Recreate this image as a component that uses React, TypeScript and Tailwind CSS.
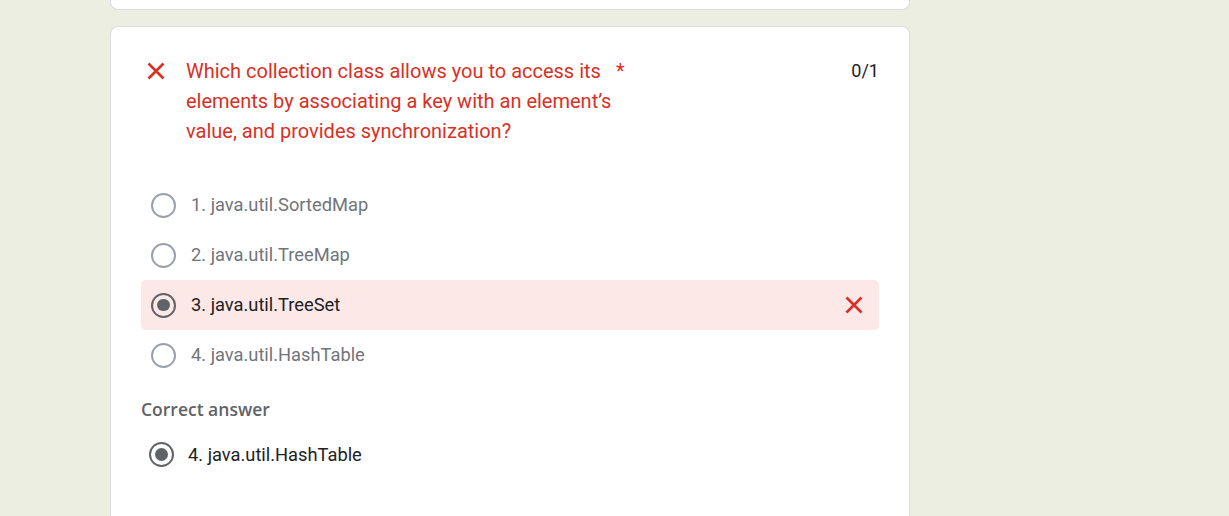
const options = [
  { label: '1. java.util.SortedMap', selected: false },
  { label: '2. java.util.TreeMap', selected: false },
  { label: '3. java.util.TreeSet', selected: true },
  { label: '4. java.util.HashTable', selected: false },
]

function Cross({ className = '' }: { className?: string }) {
  return (
    <svg className={className} width="18" height="18" viewBox="0 0 18 18" fill="none" aria-hidden="true">
      <path d="M1.5 1.5L16.5 16.5M16.5 1.5L1.5 16.5" stroke="#d93025" strokeWidth="2.6" />
    </svg>
  )
}

function Radio({ checked }: { checked: boolean }) {
  return (
    <span
      className={
        'flex h-[25px] w-[25px] shrink-0 items-center justify-center rounded-full border-[2.5px] ' +
        (checked ? 'border-[#5f6368]' : 'border-[#9aa0a6]')
      }
    >
      {checked && <span className="h-[12.5px] w-[12.5px] rounded-full bg-[#5f6368]" />}
    </span>
  )
}

export default function App() {
  return (
    <div className="min-h-[516px] w-full overflow-hidden bg-[#ebeee0] font-['Roboto',sans-serif]">
      {/* bottom of the previous card */}
      <div className="ml-[110px] h-[10px] w-[800px] rounded-b-lg border border-t-0 border-[#dadce0] bg-white" />

      <div className="ml-[110px] mt-[16px] w-[800px] rounded-t-lg border border-b-0 border-[#dadce0] bg-white px-[30px] pt-[29px] pb-[60px]">
        {/* question header */}
        <div className="flex items-start">
          <div className="flex w-[45px] shrink-0 justify-start pl-[6px] pt-[6px]">
            <Cross />
          </div>
          <div className="flex flex-1 items-start">
            <span className="w-[428px] text-[20px] leading-[30px] text-[#d93025]">
              Which collection class allows you to access its elements by associating a key with an element’s value, and provides synchronization?
            </span>
            <span className="pl-[2px] text-[20px] leading-[30px] text-[#d93025]">*</span>
          </div>
          <span className="text-[18px] leading-[30px] text-[#202124]">0/1</span>
        </div>

        {/* options */}
        <div className="mt-[34px] flex flex-col">
          {options.map(o => (
            <div
              key={o.label}
              className={
                'flex h-[50px] items-center rounded-[5px] pl-[10px] pr-[16px] ' +
                (o.selected ? 'bg-[#fce8e6]' : '')
              }
            >
              <Radio checked={o.selected} />
              <span
                className={
                  'ml-[15px] flex-1 text-[18.3px] ' + (o.selected ? 'text-[#202124]' : 'text-[#70757a]')
                }
              >
                {o.label}
              </span>
              {o.selected && <Cross />}
            </div>
          ))}
        </div>

        {/* correct answer */}
        <div className="mt-[17px] font-['Open_Sans',sans-serif] text-[17.5px] font-semibold leading-[24px] text-[#5f6368]">
          Correct answer
        </div>
        <div className="mt-[20px] flex items-center pl-[8px]">
          <Radio checked />
          <span className="ml-[14px] text-[18.3px] text-[#202124]">4. java.util.HashTable</span>
        </div>
      </div>
    </div>
  )
}
